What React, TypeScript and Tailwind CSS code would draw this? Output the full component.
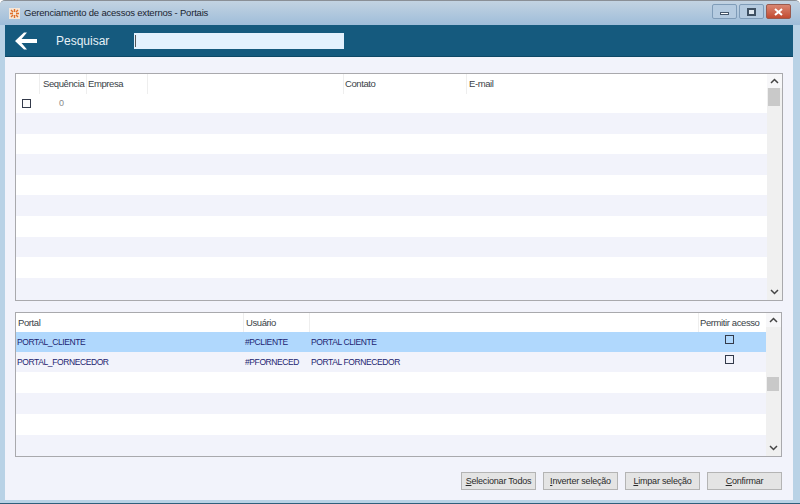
import React from "react";

const font = { fontFamily: '"Liberation Sans", "DejaVu Sans", sans-serif' };

function Check({ cls = "" }: { cls?: string }) {
  return <span className={"block w-[9px] h-[9px] border border-[#333a4a] " + cls} />;
}

function Chevron({ up }: { up?: boolean }) {
  return (
    <svg width="9" height="6" viewBox="0 0 9 6" className="block">
      <path d={up ? "M1 5 L4.5 1.5 L8 5" : "M1 1 L4.5 4.5 L8 1"} fill="none" stroke="#444" strokeWidth="1.5" />
    </svg>
  );
}

function Scrollbar({ thumbTop, thumbH, cls }: { thumbTop: string; thumbH: string; cls: string }) {
  return (
    <div className={"flex flex-col shrink-0 bg-[#f0f0f0] " + cls}>
      <div className="h-[14px] bg-[#f7f7f9] flex items-center justify-center shrink-0"><Chevron up /></div>
      <div className={"shrink-0 " + thumbTop} />
      <div className={"shrink-0 ml-px mr-[2px] bg-[#c9c9c9] " + thumbH} />
      <div className="flex-1" />
      <div className="h-[16px] flex items-center justify-center shrink-0"><Chevron /></div>
    </div>
  );
}

const Btn = ({ u, rest, cls }: { u: string; rest: string; cls: string }) => (
  <button className={"h-[18px] border border-[#b4b4b4] bg-[#e4e4e4] text-[9px] leading-none tracking-[-0.2px] text-[#2a2a2a] text-center whitespace-nowrap " + cls}>
    <span><span className="underline">{u}</span>{rest}</span>
  </button>
);

export default function App() {
  const rows1 = Array.from({ length: 9 });
  const rows2 = Array.from({ length: 4 });
  return (
    <div style={font} className="w-[800px] h-[504px] overflow-hidden bg-[#b9d2e6] flex flex-col border-t border-[#8a8f96] rounded-t-[5px]">
      {/* title bar */}
      <div className="h-[24px] shrink-0 flex items-center pl-[8px] pr-[9px] bg-gradient-to-b from-[#c3d3e2] to-[#9fbdd9]">
        <svg width="11" height="11" viewBox="0 0 11 11" className="shrink-0 ml-px">
          <rect width="11" height="11" fill="#f4e6d8" />
          <path d="M2 2l2 2M9 2L7 4M2 9l2-2M9 9L7 7M5.5 1v3M5.5 7v3M1 5.5h3M7 5.5h3" stroke="#e0702a" strokeWidth="1.4" />
        </svg>
        <span className="ml-[4px] text-[9.5px] tracking-[-0.2px] text-[#1a2430] whitespace-nowrap">Gerenciamento de acessos externos - Portais</span>
        <div className="ml-auto flex gap-[2px] mt-[-3px]">
          <div className="w-[25px] h-[15px] border border-[#7f9cb8] rounded-[2px] bg-[#b5cbe0] flex items-center justify-center">
            <span className="block w-[9px] h-[3px] mt-[4px] bg-white border border-[#44566a]" />
          </div>
          <div className="w-[25px] h-[15px] border border-[#7f9cb8] rounded-[2px] bg-[#b5cbe0] flex items-center justify-center">
            <span className="block w-[9px] h-[8px] bg-[#dfe8f0] border-2 border-[#3f5163]" />
          </div>
          <div className="w-[25px] h-[15px] border border-[#9a5a4e] rounded-[2px] bg-gradient-to-b from-[#d98672] to-[#c24a30] flex items-center justify-center">
            <svg width="9" height="8" viewBox="0 0 9 8"><path d="M1 1l7 6M8 1L1 7" stroke="#fff" strokeWidth="2" /></svg>
          </div>
        </div>
      </div>

      {/* body */}
      <div className="flex-1 min-h-0 ml-[5px] mr-[7px] mb-[4px] flex flex-col bg-[#f2f3fb]">
        {/* toolbar */}
        <div className="h-[32px] shrink-0 bg-[#155a7e] border-b border-[#0e4866] flex items-center">
          <svg width="24" height="20" viewBox="0 0 24 20" className="ml-[9px] shrink-0">
            <path d="M1 10 L10 1.5 L13 1.5 L7.5 8 L23 8 L23 12 L7.5 12 L13 18.5 L10 18.5 Z" fill="#fff" />
          </svg>
          <span className="ml-[18px] w-[78px] shrink-0 text-[12px] text-[#e6f1f7]">Pesquisar</span>
          <div className="w-[210px] h-[16px] bg-[#e3f1fd] flex items-center pl-[1px]">
            <span className="block w-px h-[12px] bg-[#555]" />
          </div>
        </div>

        {/* grid 1 */}
        <div className="mt-[16px] ml-[10px] mr-[10px] h-[228px] shrink-0 border border-[#a9a9ad] bg-white flex">
          <div className="flex-1 min-w-0 flex flex-col">
            <div className="h-[20px] shrink-0 flex text-[9.5px] tracking-[-0.4px] leading-[20px] text-[#3a3f47] bg-white">
              <div className="w-[24px] border-r border-[#eeeeee]" />
              <div className="w-[47px] border-r border-[#eeeeee] pl-[3px]">Sequência</div>
              <div className="w-[61px] border-r border-[#eeeeee] pl-px">Empresa</div>
              <div className="w-[196px] border-r border-[#eeeeee]" />
              <div className="w-[123px] border-r border-[#eeeeee] pl-[1px]">Contato</div>
              <div className="flex-1 pl-[2px]">E-mail</div>
            </div>
            <div className="h-[19px] shrink-0 flex items-center bg-white">
              <Check cls="ml-[6px] bg-[#fbfbfb]" />
              <span className="ml-[28px] text-[9px] text-[#8a8a8a]">0</span>
            </div>
            {rows1.map((_, i) => (
              <div key={i} className={"h-[20.6px] shrink-0 " + (i % 2 === 0 ? "bg-[#f2f3fb]" : "bg-white")} />
            ))}
            <div className="flex-1 bg-[#f2f3fb]" />
          </div>
          <Scrollbar cls="w-[15px]" thumbTop="h-0" thumbH="h-[18px]" />
        </div>

        {/* grid 2 */}
        <div className="mt-[11px] ml-[10px] mr-[11px] h-[145px] shrink-0 border border-[#a9a9ad] bg-white flex">
          <div className="flex-1 min-w-0 flex flex-col">
            <div className="h-[19px] shrink-0 flex text-[9.5px] tracking-[-0.4px] leading-[19px] text-[#3a3f47] bg-white">
              <div className="w-[228px] border-r border-[#eeeeee] pl-[2px]">Portal</div>
              <div className="w-[66px] border-r border-[#eeeeee] pl-[2px]">Usuário</div>
              <div className="w-[389px] border-r border-[#eeeeee]" />
              <div className="flex-1 pl-[1px] whitespace-nowrap">Permitir acesso</div>
            </div>
            {[
              ["PORTAL_CLIENTE", "#PCLIENTE", "PORTAL CLIENTE", "bg-[#b0d8fd]"],
              ["PORTAL_FORNECEDOR", "#PFORNECED", "PORTAL FORNECEDOR", "bg-[#f2f3fb]"],
            ].map(([a, b, c, bg]) => (
              <div key={a} className={"h-[20px] shrink-0 flex items-center text-[8.5px] tracking-[-0.4px] text-[#1c2470] whitespace-nowrap " + bg}>
                <div className="w-[228px] pl-[1px]">{a}</div>
                <div className="w-[66px] pl-px">{b}</div>
                <div className="w-[389px] pl-px">{c}</div>
                <Check cls="ml-[26px] mt-[-6px]" />
              </div>
            ))}
            {rows2.map((_, i) => (
              <div key={i} className={"h-[21px] shrink-0 " + (i % 2 === 0 ? "bg-white" : "bg-[#f2f3fb]")} />
            ))}
            <div className="flex-1 bg-[#f2f3fb]" />
          </div>
          <Scrollbar cls="w-[15px]" thumbTop="h-[50px]" thumbH="h-[14px]" />
        </div>

        {/* buttons */}
        <div className="mt-[15px] mr-[11px] flex justify-end gap-[7px]">
          <Btn u="S" rest="elecionar Todos" cls="w-[75px]" />
          <Btn u="I" rest="nverter seleção" cls="w-[75px]" />
          <Btn u="L" rest="impar seleção" cls="w-[75px]" />
          <Btn u="C" rest="onfirmar" cls="w-[75px]" />
        </div>
      </div>
      <div className="h-px shrink-0 bg-[#2f5f7c] mt-[-1px]" />
    </div>
  );
}
